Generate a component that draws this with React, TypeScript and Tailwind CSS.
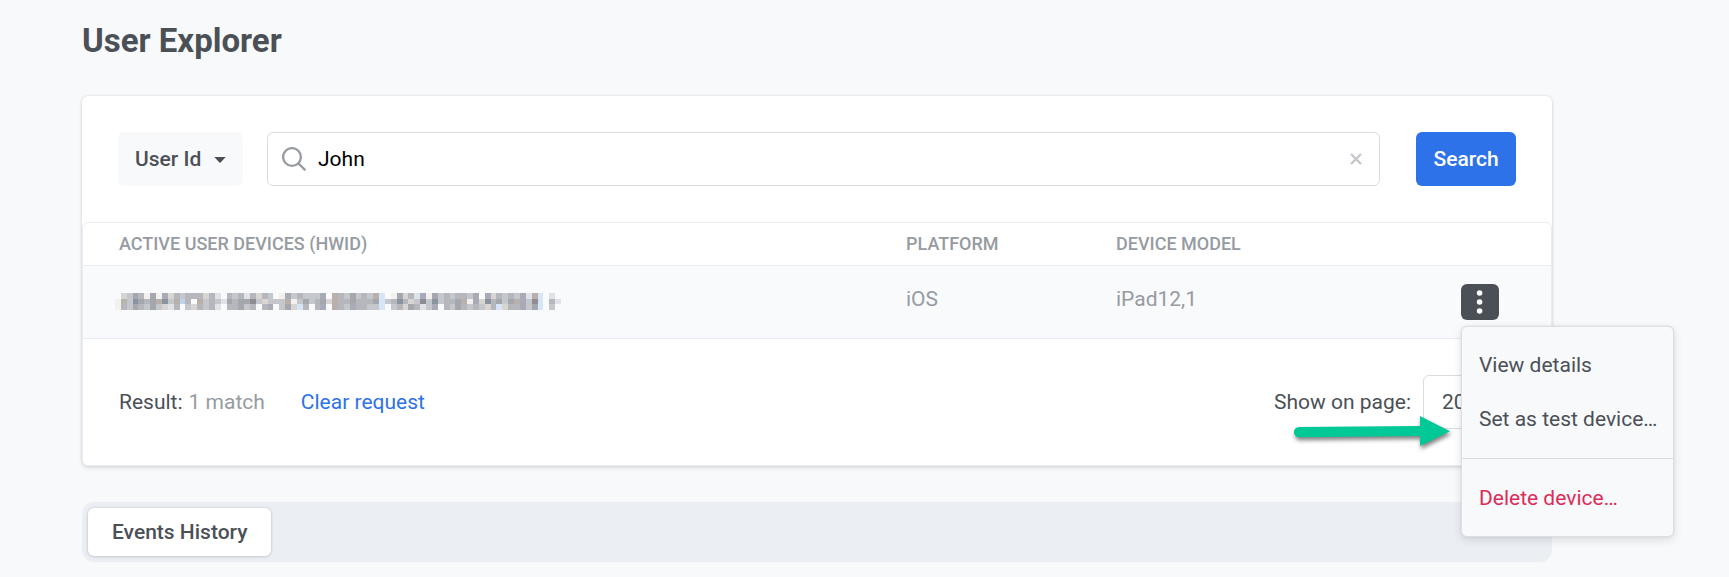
import React from "react";

const SHADES: Record<string, string> = {
  a: "#dfe2e8",
  b: "#c4c8cd",
  c: "#b5b7bc",
  d: "#a4a8ae",
  e: "#8a949e",
  f: "#f3f0ee",
  g: "#b4b8ab",
  k: "#8f8d93",
  l: "#d6e6f6",
  p: "#a9aab7",
  t: "#b9b0ab",
  u: "#bdd4ef",
  w: "#d8d5d2",
};

const MASK_ROWS = [
  ".wbdcfdfpwcbcccwca.cbcacwcb.fpbcbbbp.tcbdbcbtl.fdwcapfdbcbccbp.pwcbcbpatl.a.",
  "fgbedcdtebtuc.tbcbadcddkbwbbbtfbdbcdwtccdcccdlbcecwbkbebccdtfpwecdbdtpbkl.ca",
  "fcbdcbdbwac.bwcbca.ccdbc.cp.bdwlc.cp.tcbpccbbl.bcwdcabp.cbdcbcbwclwccpbdl.b.",
];

function MaskedId() {
  return (
    <svg
      className="-ml-1 block h-[17px] w-[446px]"
      viewBox="0 0 76 3"
      preserveAspectRatio="none"
      shapeRendering="crispEdges"
      role="img"
      aria-label="Hidden device identifier"
    >
      {MASK_ROWS.map((row, y) =>
        row.split("").map((shade, x) =>
          SHADES[shade] ? (
            <rect key={`${x}-${y}`} x={x} y={y} width="1" height="1" fill={SHADES[shade]} />
          ) : null
        )
      )}
    </svg>
  );
}

function Caret() {
  return (
    <svg className="pointer-events-none absolute right-[17px] top-[25px] h-1.5 w-3" viewBox="0 0 12 6" aria-hidden="true">
      <path d="M0.3 0H11.7L6.6 5.4Q6 6 5.4 5.4Z" fill="#4b5057" />
    </svg>
  );
}

function SearchBar() {
  return (
    <form className="flex items-center p-9" onSubmit={(e) => e.preventDefault()}>
      <div className="relative mr-6">
        <select
          aria-label="Search by"
          className="block h-[54px] w-[125px] appearance-none rounded-md bg-[#f8f9fb] pl-[17px] pr-9 font-medium text-[#4b5057]"
        >
          <option>User Id</option>
        </select>
        <Caret />
      </div>
      <div className="mr-9 flex h-[54px] min-w-0 flex-1 items-center rounded-md border border-[#d9dde2] bg-white pl-3.5 pr-[17px]">
        <svg className="mr-3 h-6 w-6 shrink-0" viewBox="0 0 24 24" fill="none" stroke="#969ba1" strokeWidth="2.3" aria-hidden="true">
          <circle cx="10" cy="10" r="8.9" />
          <path d="M16.3 16.3L23.3 23.3" />
        </svg>
        <input
          type="text"
          aria-label="Search query"
          defaultValue="John"
          className="h-full min-w-0 flex-1 bg-transparent text-black outline-none"
        />
        <button type="button" aria-label="Clear" className="shrink-0">
          <svg className="h-3 w-3" viewBox="0 0 12 12" fill="none" stroke="#c4c7cb" strokeWidth="2.4" aria-hidden="true">
            <path d="M1 1L11 11M11 1L1 11" />
          </svg>
        </button>
      </div>
      <button type="submit" className="h-[54px] w-[100px] rounded-md bg-[#2d72e8] font-medium text-white">
        Search
      </button>
    </form>
  );
}

function Arrow() {
  return (
    <svg
      className="pointer-events-none absolute right-full top-[84px] mr-2.5 h-11 w-[162px] overflow-visible"
      viewBox="0 0 162 44"
      aria-hidden="true"
    >
      <g className="drop-shadow-[1px_3px_2px_rgba(0,0,0,0.5)]" fill="#00c896">
        <path d="M10 16.9L131 16.1V6L161 21.2L131 36V26L10 27.2A5.1 5.1 0 0 1 10 16.9Z" />
      </g>
    </svg>
  );
}

function DeviceMenu() {
  return (
    <div className="relative w-[38px]">
      <button
        type="button"
        aria-label="Device actions"
        aria-expanded="true"
        className="flex h-9 w-[38px] items-center justify-center rounded-md bg-[#4b5057]"
      >
        <svg className="h-6 w-6" viewBox="0 0 24 24" fill="#fff" aria-hidden="true">
          <circle cx="11.6" cy="3" r="2.8" />
          <circle cx="11.6" cy="12" r="2.8" />
          <circle cx="11.6" cy="21" r="2.8" />
        </svg>
      </button>
      <div className="absolute left-0 top-[42px] z-10">
        <div
          role="menu"
          className="w-[213px] rounded-md border border-[#dcdfe4] bg-[#f8f9fb] text-[#4b5057] shadow-[0_3px_9px_rgba(75,80,87,0.16),0_0_2px_rgba(75,80,87,0.16)]"
        >
          <div className="pb-3 pt-[11px]">
            <button type="button" role="menuitem" className="block h-[54px] w-full whitespace-nowrap px-[17px] text-left">
              View details
            </button>
            <button type="button" role="menuitem" className="block h-[54px] w-full whitespace-nowrap px-[17px] text-left">
              Set as test device…
            </button>
          </div>
          <div className="border-t border-[#d9dde2] pb-[11px] pt-3">
            <button type="button" role="menuitem" className="block h-[54px] w-full whitespace-nowrap px-[17px] text-left text-[#dc2c59]">
              Delete device…
            </button>
          </div>
        </div>
        <Arrow />
      </div>
    </div>
  );
}

function DevicesTable() {
  return (
    <table className="w-full table-fixed border-separate border-spacing-0 text-left text-[#969ba1]">
      <thead>
        <tr className="h-[43px] text-lg leading-6">
          <th className="border-b border-[#e9edf2] pl-9 font-medium">ACTIVE USER DEVICES (HWID)</th>
          <th className="w-[210px] border-b border-[#e9edf2] font-medium">PLATFORM</th>
          <th className="w-[345px] border-b border-[#e9edf2] font-medium">DEVICE MODEL</th>
          <th className="w-[90px] border-b border-[#e9edf2]" aria-label="Actions" />
        </tr>
      </thead>
      <tbody>
        <tr className="bg-[#f9fafc] align-top">
          <td className="border-b border-[#e9edf2] py-[18px] pl-9">
            <div className="pt-[9px]">
              <MaskedId />
            </div>
          </td>
          <td className="border-b border-[#e9edf2] py-[18px]">iOS</td>
          <td className="border-b border-[#e9edf2] py-[18px]">iPad12,1</td>
          <td className="border-b border-[#e9edf2] py-[18px]">
            <DeviceMenu />
          </td>
        </tr>
      </tbody>
    </table>
  );
}

function ResultsFooter() {
  return (
    <div className="flex items-center justify-between p-9">
      <div className="flex items-center gap-9">
        <p className="flex gap-1.5 text-[#4b5057]">
          <span>Result:</span>
          <span className="text-[#969ba1]">1 match</span>
        </p>
        <a href="#clear" className="text-[#2d72e8]">
          Clear request
        </a>
      </div>
      <div className="flex items-center gap-3 text-[#4b5057]">
        <label htmlFor="page-size">Show on page:</label>
        <select
          id="page-size"
          className="h-[54px] w-[92px] appearance-none rounded-md border border-[#d9dde2] bg-white pl-[18px]"
        >
          <option>20</option>
        </select>
      </div>
    </div>
  );
}

export default function App() {
  return (
    <main className="min-h-screen bg-[#f8f9fb] pb-4 pl-[82px] pr-[177px] pt-[17px] font-['Roboto',sans-serif] text-[21px] leading-[30px]">
      <h1 className="mb-[31px] text-[33px] font-bold leading-[48px] text-[#4b5057]">User Explorer</h1>
      <section className="rounded-md bg-white shadow-[0_0_2px_rgba(75,80,87,0.22),0_2px_4px_rgba(75,80,87,0.14)]">
        <SearchBar />
        <div className="rounded-md border border-[#e9edf2]">
          <DevicesTable />
          <ResultsFooter />
        </div>
      </section>
      <nav className="mt-9 rounded-xl bg-[#ebeef3] p-1.5">
        <button
          type="button"
          className="h-12 rounded-md bg-white px-6 font-medium text-[#4b5057] shadow-[0_0_3px_rgba(75,80,87,0.2),0_1px_3px_rgba(75,80,87,0.14)]"
        >
          Events History
        </button>
      </nav>
    </main>
  );
}
